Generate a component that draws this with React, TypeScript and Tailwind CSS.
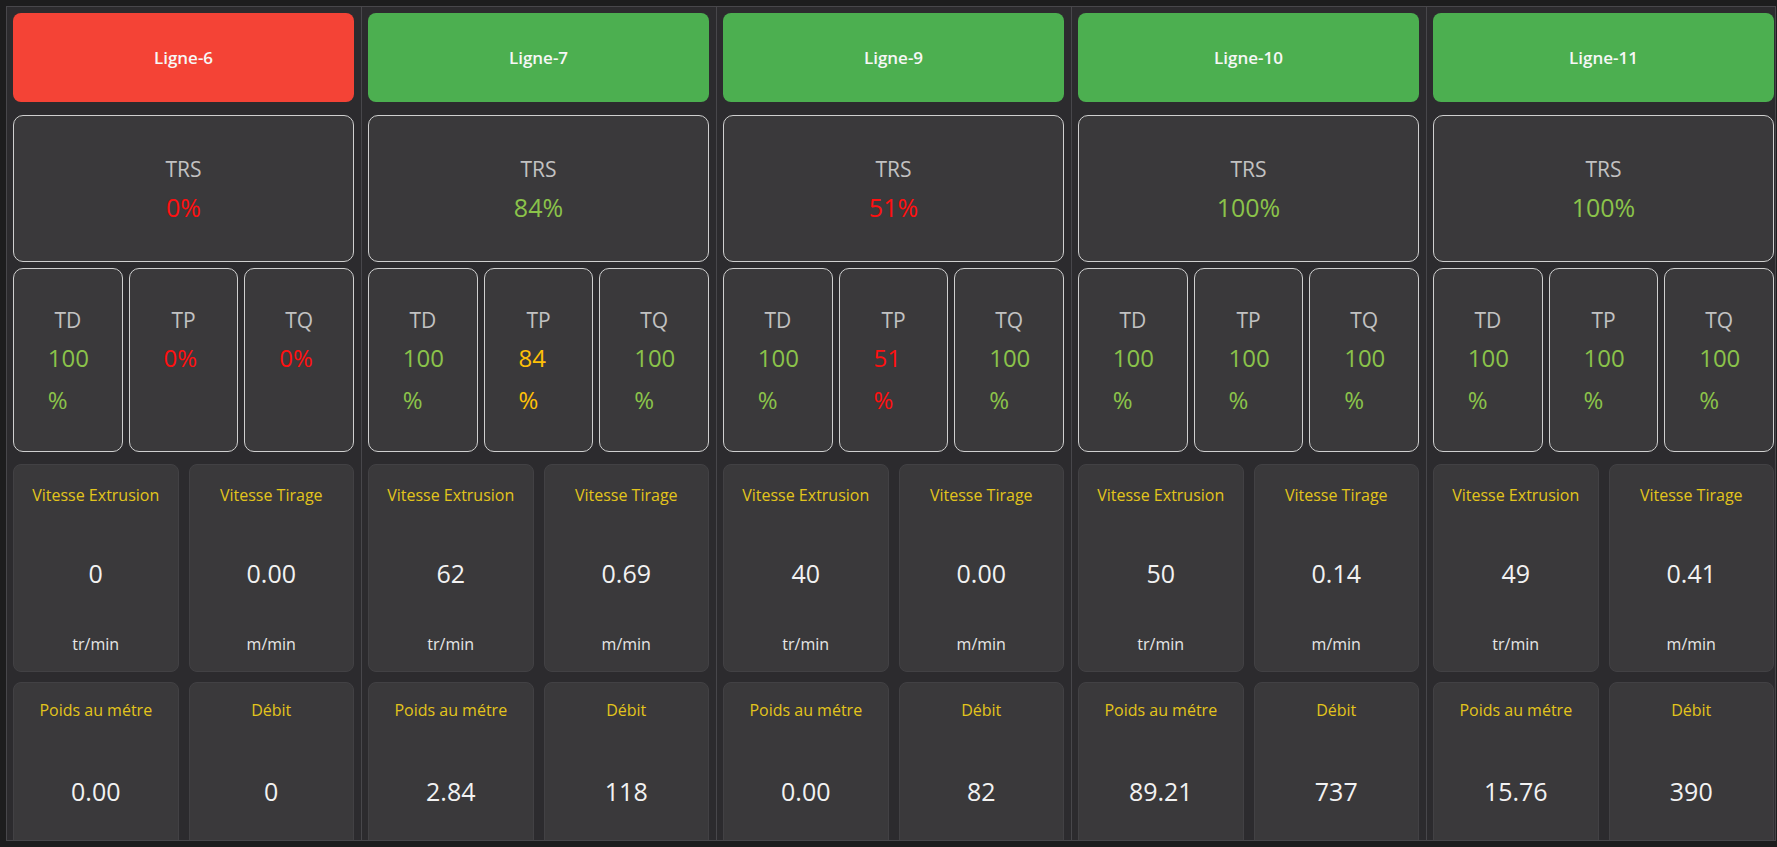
import { Fragment } from 'react';

type Tone = 'green' | 'red' | 'amber';

const toneClass: Record<Tone, string> = {
    green: 'text-[#8bc34a]',
    red: 'text-[#ff1010]',
    amber: 'text-[#ffc107]',
};

type Line = {
    name: string;
    running: boolean;
    trs: number;
    trsTone: Tone;
    rates: { label: string; value: number; tone: Tone }[];
    extrusion: string;
    tirage: string;
    poids: string;
    debit: string;
};

const lines: Line[] = [
    {
        name: 'Ligne-6',
        running: false,
        trs: 0,
        trsTone: 'red',
        rates: [
            { label: 'TD', value: 100, tone: 'green' },
            { label: 'TP', value: 0, tone: 'red' },
            { label: 'TQ', value: 0, tone: 'red' },
        ],
        extrusion: '0',
        tirage: '0.00',
        poids: '0.00',
        debit: '0',
    },
    {
        name: 'Ligne-7',
        running: true,
        trs: 84,
        trsTone: 'green',
        rates: [
            { label: 'TD', value: 100, tone: 'green' },
            { label: 'TP', value: 84, tone: 'amber' },
            { label: 'TQ', value: 100, tone: 'green' },
        ],
        extrusion: '62',
        tirage: '0.69',
        poids: '2.84',
        debit: '118',
    },
    {
        name: 'Ligne-9',
        running: true,
        trs: 51,
        trsTone: 'red',
        rates: [
            { label: 'TD', value: 100, tone: 'green' },
            { label: 'TP', value: 51, tone: 'red' },
            { label: 'TQ', value: 100, tone: 'green' },
        ],
        extrusion: '40',
        tirage: '0.00',
        poids: '0.00',
        debit: '82',
    },
    {
        name: 'Ligne-10',
        running: true,
        trs: 100,
        trsTone: 'green',
        rates: [
            { label: 'TD', value: 100, tone: 'green' },
            { label: 'TP', value: 100, tone: 'green' },
            { label: 'TQ', value: 100, tone: 'green' },
        ],
        extrusion: '50',
        tirage: '0.14',
        poids: '89.21',
        debit: '737',
    },
    {
        name: 'Ligne-11',
        running: true,
        trs: 100,
        trsTone: 'green',
        rates: [
            { label: 'TD', value: 100, tone: 'green' },
            { label: 'TP', value: 100, tone: 'green' },
            { label: 'TQ', value: 100, tone: 'green' },
        ],
        extrusion: '49',
        tirage: '0.41',
        poids: '15.76',
        debit: '390',
    },
];

function RateBox({ label, value, tone }: { label: string; value: number; tone: Tone }) {
    return (
        <div className="flex-1 h-[184px] rounded-[10px] border border-[#cfcfcf] bg-[#3a393b] flex flex-col items-center pt-[38px]">
            <div className="text-[21px] leading-[26px] text-[#c2c2c2]">{label}</div>
            <div className={`w-[40px] mt-[4px] text-[24px] leading-[42px] text-left ${toneClass[tone]}`}>
                {value}
                <wbr />%
            </div>
        </div>
    );
}

function MetricBox({ label, value, unit, top }: { label: string; value: string; unit?: string; top?: boolean }) {
    return (
        <div
            className={`h-[208px] rounded-[8px] bg-[#3a393b] border border-[#424144] flex flex-col items-center pb-[16px] ${
                top ? 'pt-[19px]' : 'pt-[16px]'
            }`}
        >
            <div className="text-[16px] leading-[22px] text-[#e3c51c] whitespace-nowrap">{label}</div>
            <div className={`flex-1 flex items-center text-[25px] text-[#f2f2f2] ${top ? 'pt-[9px]' : 'pt-[12px]'}`}>
                {value}
            </div>
            {/* unit row (the lower cards run past the bottom edge) */}
            <div className="h-[22px] text-[16px] leading-[22px] text-[#e6e6e6]">{unit}</div>
        </div>
    );
}

function LineColumn({ line }: { line: Line }) {
    return (
        <div className="w-[355px] shrink-0 border-r border-[#48474b] pl-[6px] pr-[7px] pt-[6px] flex flex-col">
            {/* Header */}
            <div
                className={`shrink-0 h-[89px] rounded-[8px] flex items-center justify-center text-[17px] font-semibold text-[#f7f7f7] ${
                    line.running ? 'bg-[#4caf50]' : 'bg-[#f44336]'
                }`}
            >
                {line.name}
            </div>

            {/* TRS */}
            <div className="shrink-0 mt-[13px] h-[147px] rounded-[10px] border border-[#cfcfcf] bg-[#3a393b] flex flex-col items-center justify-center">
                <div className="text-[21px] leading-[26px] text-[#c2c2c2]">TRS</div>
                <div className={`mt-[10px] text-[25px] leading-[30px] ${toneClass[line.trsTone]}`}>{line.trs}%</div>
            </div>

            {/* TD / TP / TQ */}
            <div className="shrink-0 mt-[6px] flex gap-[6px]">
                {line.rates.map((r) => (
                    <RateBox key={r.label} label={r.label} value={r.value} tone={r.tone} />
                ))}
            </div>

            {/* Metrics */}
            <div className="shrink-0 mt-[12px] grid grid-cols-2 gap-x-[10px] gap-y-[10px]">
                <MetricBox top label="Vitesse Extrusion" value={line.extrusion} unit="tr/min" />
                <MetricBox top label="Vitesse Tirage" value={line.tirage} unit="m/min" />
                <MetricBox label="Poids au métre" value={line.poids} />
                <MetricBox label="Débit" value={line.debit} />
            </div>
        </div>
    );
}

export default function App() {
    return (
        <div className="h-screen bg-[#1d1d1e] p-[6px] font-['Open_Sans',sans-serif]">
            <div className="w-[1770px] h-full border border-[#48474b] bg-[#2c2b2e] flex overflow-hidden">
                {lines.map((line) => (
                    <Fragment key={line.name}>
                        <LineColumn line={line} />
                    </Fragment>
                ))}
            </div>
        </div>
    );
}
